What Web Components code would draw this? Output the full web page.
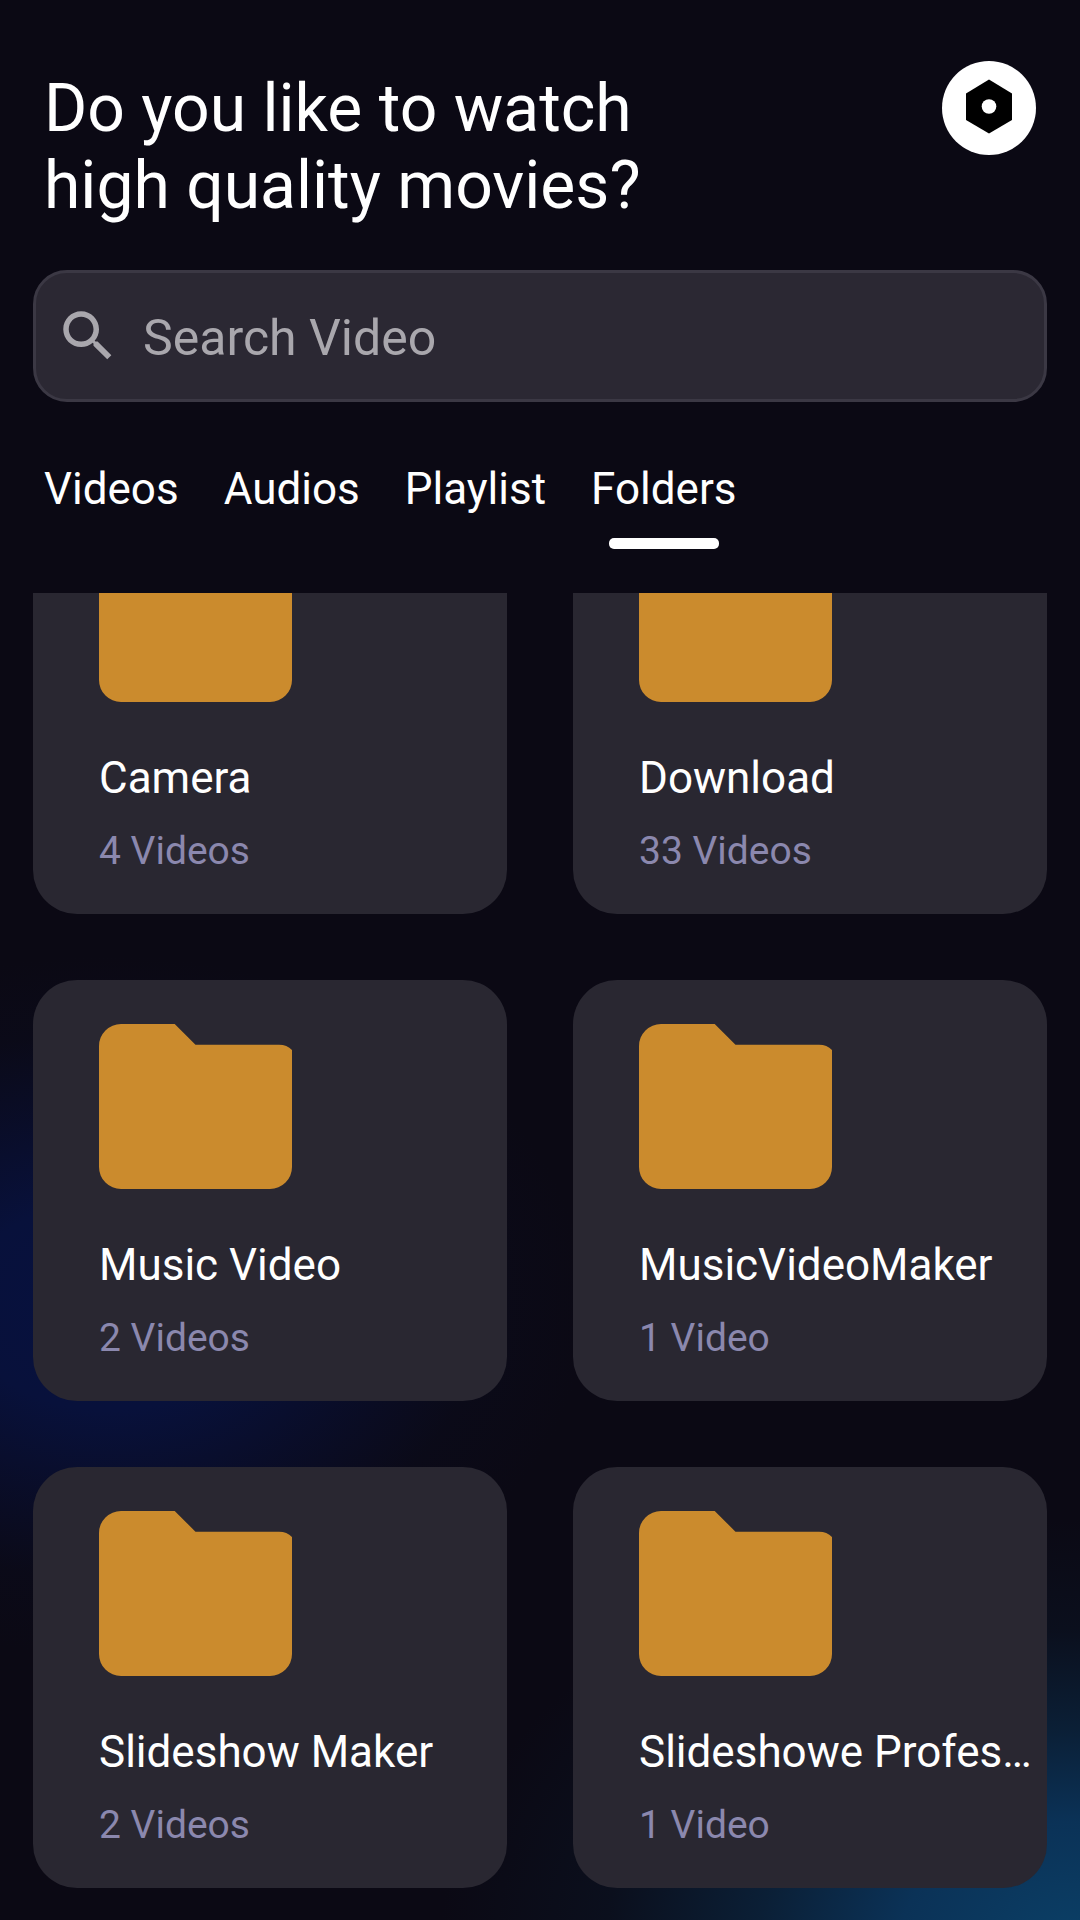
<!DOCTYPE html>
<html lang="en">
<head>
<meta charset="utf-8">
<meta name="viewport" content="width=device-width, initial-scale=1">
<title>Video Player</title>
<style>
  body { margin: 0; font-family: Roboto, "Liberation Sans", sans-serif; color: #fff; }
</style>
</head>
<body>
<player-app>
  <page-header slot="header">Do you like to watch<br>high quality movies?</page-header>
  <search-field slot="search" label="Search Video"></search-field>
  <tab-bar slot="tabs" items="Videos,Audios,Playlist,Folders" selected="Folders"></tab-bar>
  <folder-card count="4 Videos">Camera</folder-card>
  <folder-card count="33 Videos">Download</folder-card>
  <folder-card count="2 Videos">Music Video</folder-card>
  <folder-card count="1 Video">MusicVideoMaker</folder-card>
  <folder-card count="2 Videos">Slideshow Maker</folder-card>
  <folder-card count="1 Video">Slideshowe Profes…</folder-card>
</player-app>

<template id="player-app">
  <style>
    :host {
      display: flex; flex-direction: column; height: 100vh; overflow: hidden;
      background:
        radial-gradient(ellipse 640px 420px at 100% 101%, #0b3f66 0%, #0b3257 28%, rgba(11,35,60,.85) 50%, rgba(11,24,42,.4) 74%, rgba(11,9,20,0) 100%),
        radial-gradient(ellipse 480px 350px at 10% 68%, #07113f 0%, #08113b 30%, rgba(9,14,46,.75) 56%, rgba(10,12,32,.35) 78%, rgba(11,9,20,0) 100%),
        #0b0914;
    }
    main {
      flex: 1; min-height: 0; overflow-y: auto; scrollbar-width: none;
      margin-top: 44px; padding: 0 33px;
    }
    .grid {
      display: grid; grid-template-columns: repeat(2, minmax(0, 1fr)); gap: 66px;
      padding-bottom: 66px;
    }
  </style>
  <slot name="header"></slot>
  <slot name="search"></slot>
  <slot name="tabs"></slot>
  <main><div class="grid"><slot></slot></div></main>
</template>

<template id="page-header">
  <style>
    :host { display: flex; justify-content: space-between; align-items: flex-start; padding: 61px 44px 0; }
    h1 { margin: 9px 0 0; font-size: 66px; line-height: 77px; font-weight: 400; }
    button { flex: none; width: 94px; height: 94px; border: 0; border-radius: 50%; padding: 0; background: #fff; }
    svg { display: block; }
  </style>
  <h1><slot></slot></h1>
  <button type="button" aria-label="Settings">
    <svg width="94" height="94" viewBox="0 0 94 94" aria-hidden="true">
      <path d="M47 18.5 70 32.5V59L47 72.5 24 59V32.5Z"/>
      <circle cx="47" cy="45.5" r="7.3" fill="#fff"/>
    </svg>
  </button>
</template>

<template id="search-field">
  <style>
    :host { display: block; padding: 46px 33px 0; }
    label {
      display: flex; align-items: center; gap: 22px; box-sizing: border-box; height: 132px;
      padding: 0 19px; border: 3px solid #3b3844; border-radius: 34px; background: #2b2833;
    }
    svg { flex: none; fill: #a9a7ad; }
    input {
      flex: 1; min-width: 0; padding: 4px 0 0; border: 0; outline: 0; background: none;
      font: inherit; font-size: 50px; line-height: 60px; height: 60px; color: #fff;
    }
    input::placeholder { color: #a9a7ad; opacity: 1; }
  </style>
  <label>
    <svg width="66" height="66" viewBox="0 0 24 24" aria-hidden="true">
      <path d="M15.5 14h-.79l-.28-.27C15.41 12.59 16 11.11 16 9.5 16 5.91 13.09 3 9.5 3S3 5.91 3 9.5 5.91 16 9.5 16c1.61 0 3.09-.59 4.23-1.57l.27.28v.79l5 4.99L20.49 19l-4.99-5zm-6 0C7.01 14 5 11.99 5 9.5S7.01 5 9.5 5 14 7.01 14 9.5 11.99 14 9.5 14z"/>
    </svg>
    <input type="search">
  </label>
</template>

<template id="tab-bar">
  <style>
    :host { display: flex; gap: 45px; padding: 60px 44px 0; }
    button {
      display: flex; flex-direction: column; align-items: center; gap: 22px; padding: 0;
      border: 0; background: none; color: inherit; font: inherit; font-size: 44px; line-height: 54px;
    }
    button::after { content: ""; width: 110px; height: 11px; border-radius: 5px; }
    button[aria-selected="true"]::after { background: #fff; }
  </style>
</template>

<template id="folder-card">
  <style>
    :host { display: block; }
    a {
      display: block; padding: 44px 11px 39px 66px; border-radius: 44px;
      background: #292731; color: inherit; text-decoration: none;
    }
    svg { display: block; fill: #cb8b2d; }
    h2 {
      margin: 49px 0 0; font-size: 44px; line-height: 54px; font-weight: 400;
      white-space: nowrap; overflow: hidden; text-overflow: ellipsis;
    }
    p { margin: 22px 0 0; font-size: 39px; line-height: 48px; color: #8b88ae; }
  </style>
  <a href="#">
    <svg width="193" height="165" viewBox="0 0 193 165" aria-hidden="true">
      <path d="M22 0H75.7L96.5 20.7H180Q188 20.7 193 26V143A22 22 0 0 1 171 165H22A22 22 0 0 1 0 143V22A22 22 0 0 1 22 0Z"/>
    </svg>
    <h2><slot></slot></h2>
    <p></p>
  </a>
</template>

<script>
  class TemplateElement extends HTMLElement {
    constructor() {
      super();
      const template = document.getElementById(this.localName);
      this.attachShadow({ mode: "open" }).append(template.content.cloneNode(true));
    }
  }

  class PageHeader extends TemplateElement {}

  class SearchField extends TemplateElement {
    connectedCallback() {
      const input = this.shadowRoot.querySelector("input");
      input.placeholder = this.getAttribute("label");
      input.setAttribute("aria-label", this.getAttribute("label"));
    }
  }

  class TabBar extends TemplateElement {
    connectedCallback() {
      this.setAttribute("role", "tablist");
      for (const name of this.getAttribute("items").split(",")) {
        const tab = document.createElement("button");
        tab.type = "button";
        tab.textContent = name;
        tab.setAttribute("role", "tab");
        tab.setAttribute("aria-selected", String(name === this.getAttribute("selected")));
        tab.addEventListener("click", () => this.select(tab));
        this.shadowRoot.append(tab);
      }
    }
    select(chosen) {
      for (const tab of this.shadowRoot.querySelectorAll("button")) {
        tab.setAttribute("aria-selected", String(tab === chosen));
      }
    }
  }

  class FolderCard extends TemplateElement {
    connectedCallback() {
      this.shadowRoot.querySelector("p").textContent = this.getAttribute("count");
    }
  }

  class PlayerApp extends TemplateElement {
    scrollList(offset) {
      this.shadowRoot.querySelector("main").scrollTop = offset;
    }
  }

  customElements.define("page-header", PageHeader);
  customElements.define("search-field", SearchField);
  customElements.define("tab-bar", TabBar);
  customElements.define("folder-card", FolderCard);
  customElements.define("player-app", PlayerApp);

  // The folder list opens part-way down, under the fixed tabs.
  document.querySelector("player-app").scrollList(100);
</script>
</body>
</html>
